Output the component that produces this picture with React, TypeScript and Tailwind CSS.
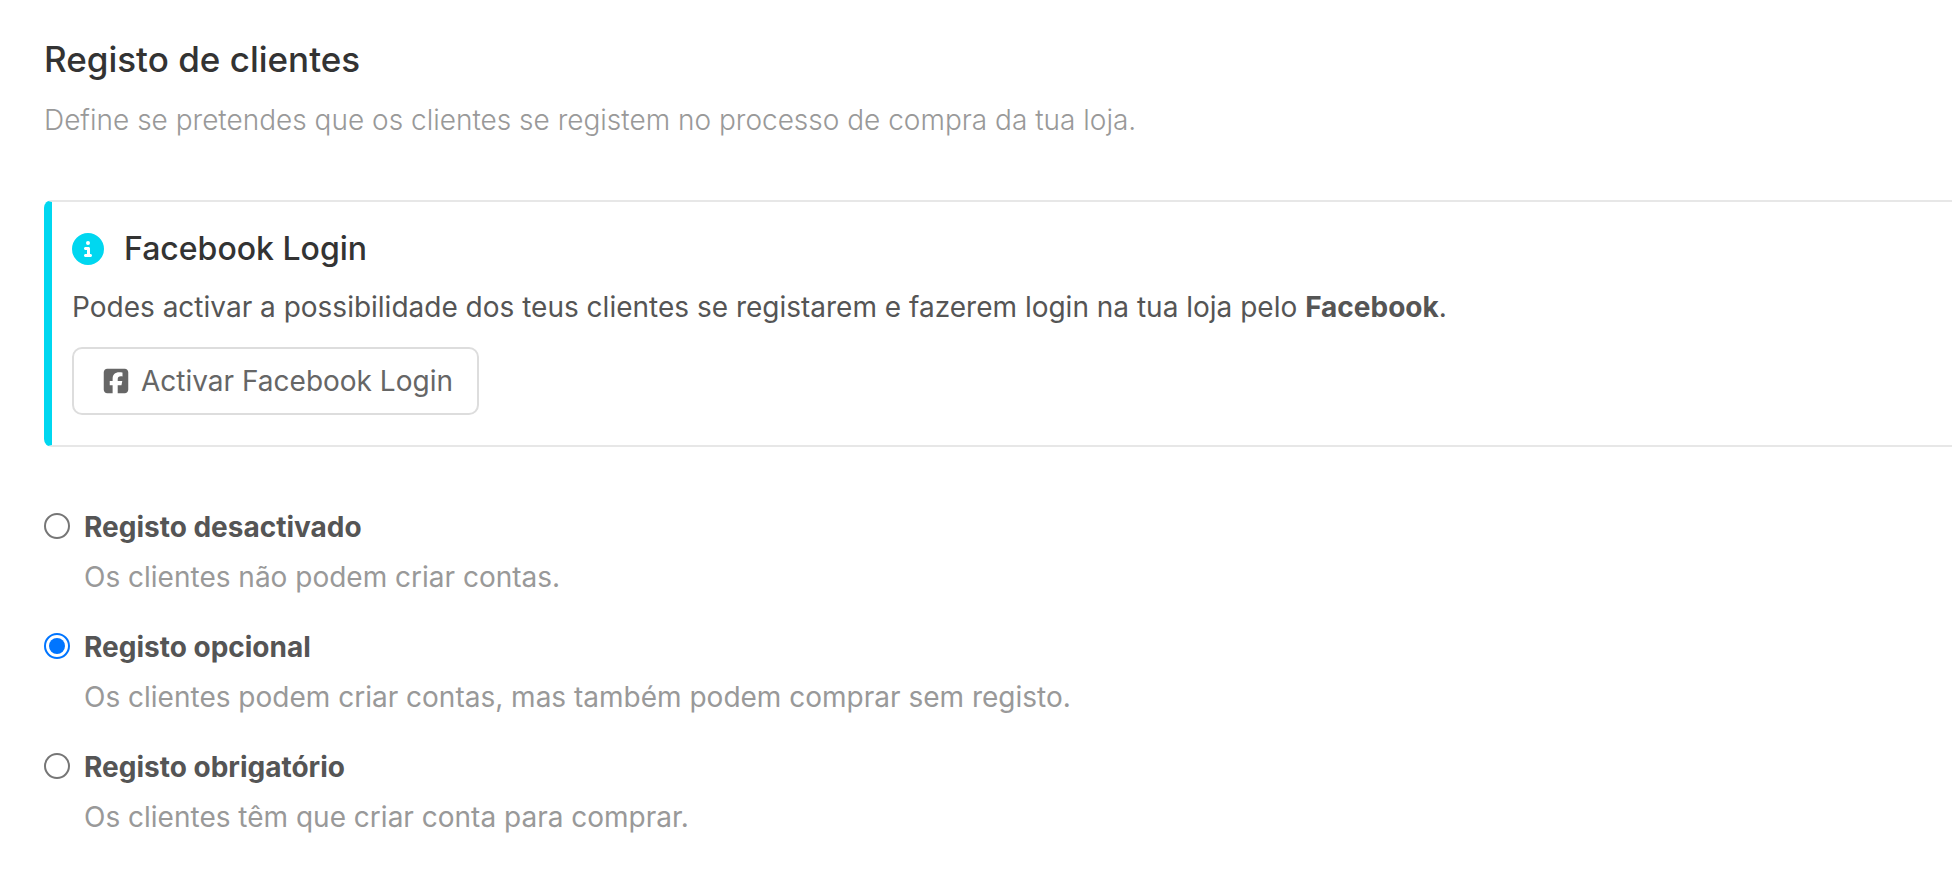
import { useState } from "react";
import { FaCircleInfo, FaSquareFacebook } from "react-icons/fa6";

const options = [
    { id: "disabled", title: "Registo desactivado", desc: "Os clientes não podem criar contas." },
    { id: "optional", title: "Registo opcional", desc: "Os clientes podem criar contas, mas também podem comprar sem registo." },
    { id: "required", title: "Registo obrigatório", desc: "Os clientes têm que criar conta para comprar." },
];

export default function App() {
    const [selected, setSelected] = useState("optional");

    return (
        <main className="min-h-screen bg-white pt-[39px] pl-11 pb-10 font-['Inter',sans-serif] text-[28px] leading-10 text-[#555]">
            {/* Heading */}
            <h1 className="text-[35px] leading-10 font-medium text-[#333]">Registo de clientes</h1>
            <p className="mt-[21px] font-light text-[#999]">
                Define se pretendes que os clientes se registem no processo de compra da tua loja.
            </p>

            {/* Facebook notice */}
            <section className="mt-[60px] rounded-l-lg border-y-2 border-l-8 border-y-[#e7e7e7] border-l-[#00d7f0] pt-[27px] pb-[30px] pl-5">
                <div className="flex items-center gap-5">
                    <FaCircleInfo className="size-8 text-[#00d7f0]" />
                    <h2 className="text-[32px] leading-10 font-medium text-[#333]">Facebook Login</h2>
                </div>
                <p className="mt-[18px]">
                    Podes activar a possibilidade dos teus clientes se registarem e fazerem login na tua loja pelo{" "}
                    <strong className="font-bold">Facebook</strong>.
                </p>
                <button
                    type="button"
                    className="mt-5 flex items-center gap-2 rounded-[10px] border-2 border-[#ddd] bg-white px-6 py-3 text-[#666]"
                >
                    <span className="flex w-[35px] justify-center">
                        <FaSquareFacebook className="size-7" />
                    </span>
                    Activar Facebook Login
                </button>
            </section>

            {/* Options */}
            <div role="radiogroup" aria-label="Registo de clientes" className="mt-[60px] flex flex-col gap-[30px]">
                {options.map((o) => (
                    <div key={o.id}>
                        <div className="flex items-start gap-3.5">
                            <input
                                type="radio"
                                name="registration"
                                id={o.id}
                                checked={selected === o.id}
                                onChange={() => setSelected(o.id)}
                                aria-describedby={`${o.id}-desc`}
                                className="mt-1.5 flex size-[26px] appearance-none items-center justify-center rounded-full border-2 border-[#767676] bg-white before:size-4 before:rounded-full checked:border-[#0075ff] checked:before:bg-[#0075ff]"
                            />
                            <label htmlFor={o.id} className="font-bold">{o.title}</label>
                        </div>
                        <p id={`${o.id}-desc`} className="mt-2.5 pl-10 text-[#999]">{o.desc}</p>
                    </div>
                ))}
            </div>
        </main>
    );
}
